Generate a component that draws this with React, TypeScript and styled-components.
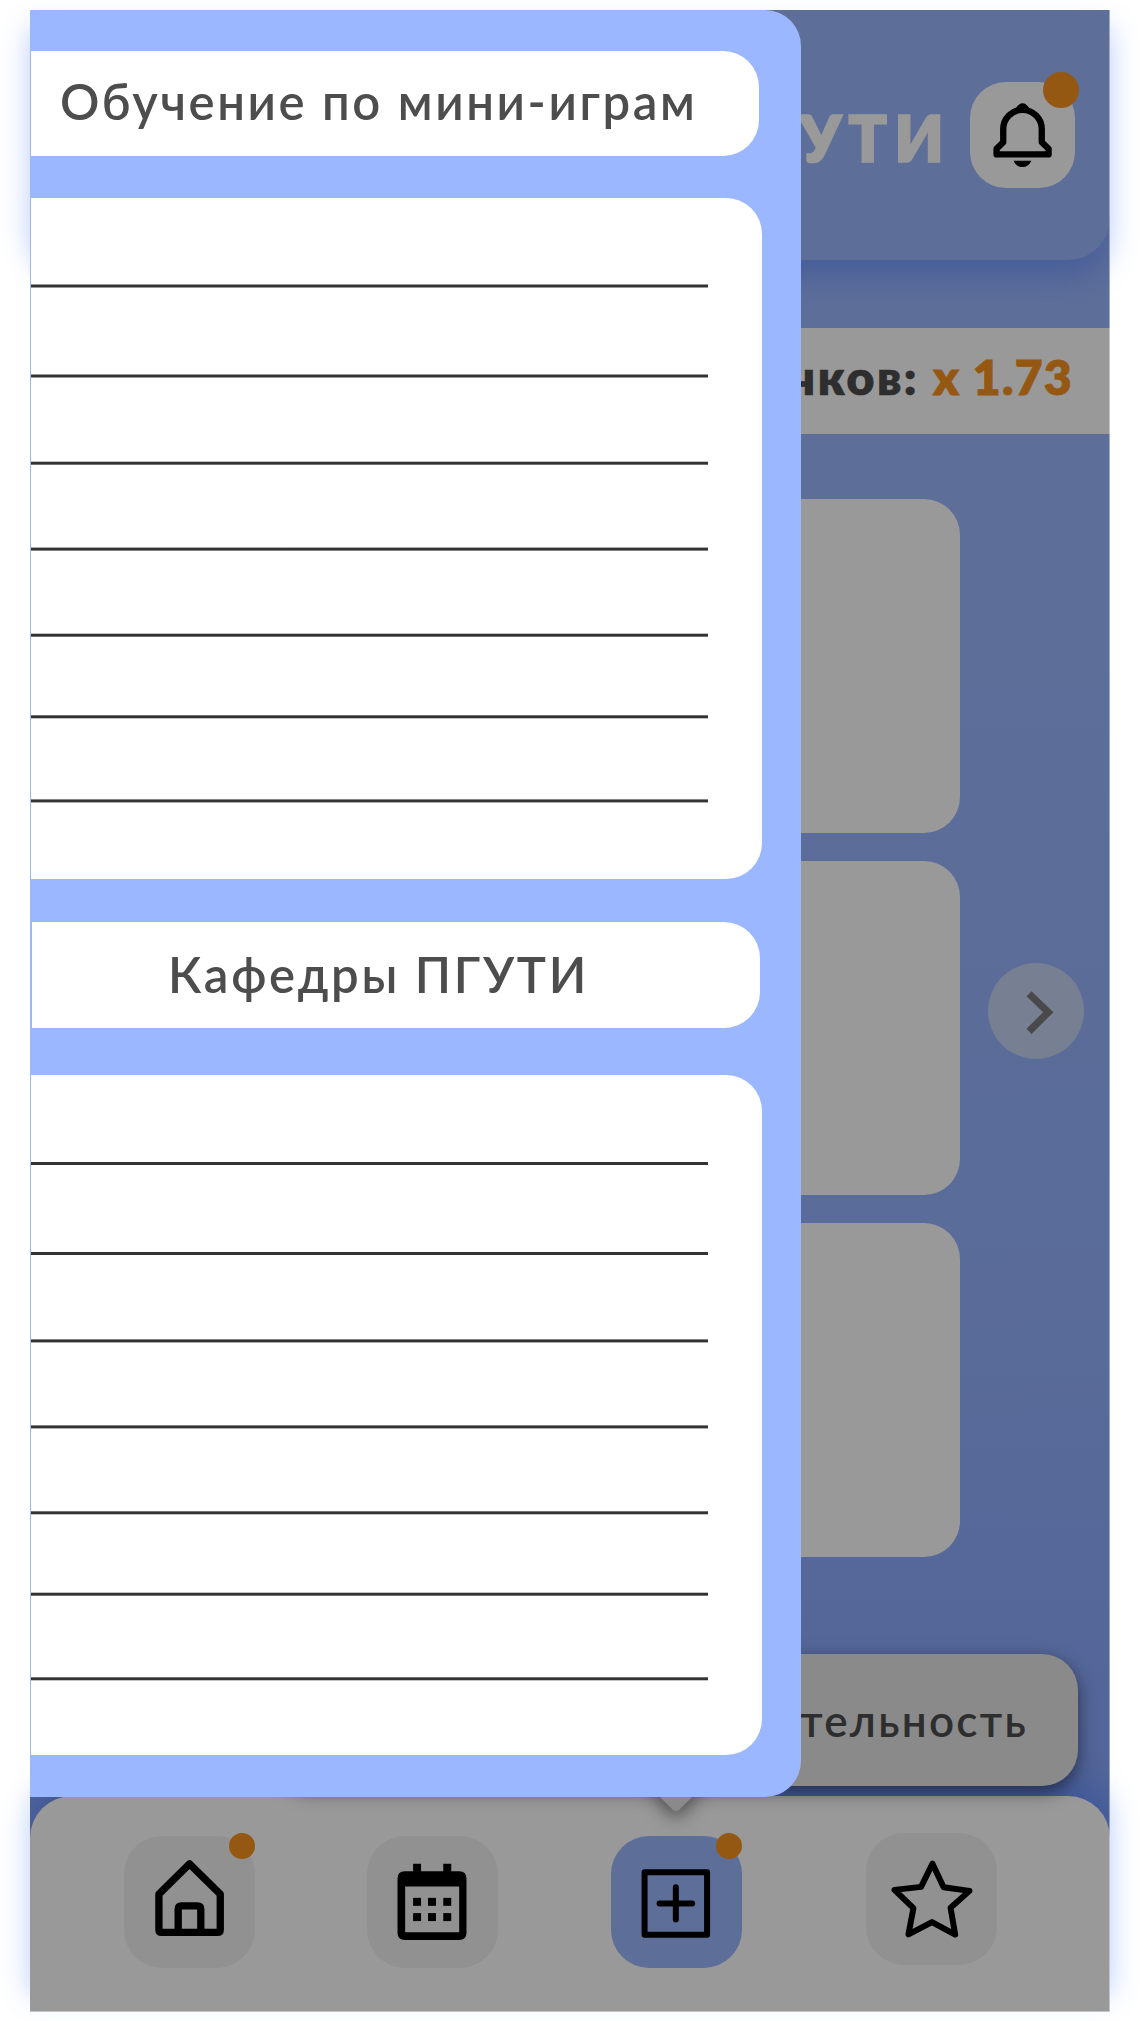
import React from "react";
import styled, { createGlobalStyle } from "styled-components";

const FONT = `Lato, "Open Sans", "Noto Sans", sans-serif`;
const WAVE = "rgba(56, 112, 255, 0.35)";

const GlobalStyle = createGlobalStyle`
  *, *::before, *::after { box-sizing: border-box; }
  html, body { margin: 0; padding: 0; background: #fff; }
  body { height: 2021px; font-family: ${FONT}; overflow: hidden; }
`;

const Phone = styled.main`
  position: relative;
  display: flex;
  flex-direction: column;
  width: 1080px;
  height: 2002px;
  margin: 10px 0 0 30px;
  background: linear-gradient(#9cb8ff 25%, #96b3ff 65%, #8aa9ff 88%, #84a4ff 100%);
`;

const Header = styled.header`
  display: flex;
  flex: none;
  justify-content: flex-end;
  align-items: flex-start;
  height: 250px;
  padding: 72px 35px 0 0;
  background: #9cb8ff;
  border-radius: 0 0 42px 42px;
  box-shadow: 0 18px 28px ${WAVE};
`;

const Brand = styled.h1`
  margin: 3px 19px 0 0;
  font-size: 64px;
  line-height: 106px;
  font-weight: 800;
  letter-spacing: 7px;
  color: #fff;
  -webkit-text-stroke: 1.5px #fff;
`;

const BellButton = styled.button`
  position: relative;
  width: 105px;
  height: 106px;
  padding: 0;
  border: 0;
  border-radius: 36px;
  background: #fff;
`;

const Badge = styled.i<{ $size: number; $top: number; $right: number }>`
  position: absolute;
  top: ${(p) => p.$top}px;
  right: ${(p) => p.$right}px;
  width: ${(p) => p.$size}px;
  height: ${(p) => p.$size}px;
  border-radius: 50%;
  background: #f7931e;
`;

const ScoreBar = styled.section`
  display: flex;
  flex: none;
  justify-content: flex-end;
  align-items: center;
  gap: 14px;
  height: 106px;
  margin-top: 68px;
  padding: 0 37px 8px 0;
  background: #fff;
  font-size: 48px;
  line-height: 58px;
  font-weight: 800;
  color: #4d4d4d;
`;

const ScoreLabel = styled.span`
  letter-spacing: 2.5px;
  -webkit-text-stroke: 0.6px #4d4d4d;
`;

const ScoreValue = styled.b`
  font-weight: 800;
  letter-spacing: 1.3px;
  color: #f7931e;
  -webkit-text-stroke: 0.8px #f7931e;
`;

const Carousel = styled.section`
  display: flex;
  flex: 1;
  align-items: flex-start;
  padding: 65px 0 0 150px;
`;

const Cards = styled.div`
  display: flex;
  flex-direction: column;
  gap: 28px;
  width: 780px;
`;

const Card = styled.article`
  height: 334px;
  border-radius: 36px;
  background: #fff;
`;

const NextButton = styled.button`
  width: 96px;
  height: 96px;
  margin: 464px 0 0 28px;
  padding: 0;
  border: 0;
  border-radius: 50%;
  background: #c5d5f3;
`;

const Glyph = styled.svg`
  display: block;
  width: 100%;
  height: 100%;
`;

const NavBar = styled.nav`
  display: flex;
  flex: none;
  gap: 112px;
  height: 216px;
  padding: 40px 0 0 94px;
  background: #fff;
  border-radius: 42px 42px 0 0;
  box-shadow: 0 -18px 28px ${WAVE};
`;

const NavItem = styled.button<{ $active?: boolean; $raised?: boolean }>`
  position: relative;
  width: 131px;
  height: 132px;
  margin: ${(p) => (p.$raised ? "-3px 0 0 12px" : p.$active ? "0 0 0 1px" : "0")};
  padding: 0;
  border: 0;
  border-radius: 38px;
  background: ${(p) => (p.$active ? "#9cb8ff" : "#f2f2f2")};
`;

const Tooltip = styled.div`
  position: absolute;
  top: 1644px;
  left: 244px;
  width: 804px;
  height: 132px;
  padding-right: 50px;
  border-radius: 36px;
  background: #e6e6e6;
  filter: drop-shadow(0 6px 9px rgba(0, 0, 0, 0.5));
  font-size: 44px;
  line-height: 133px;
  font-weight: 600;
  letter-spacing: 2.3px;
  text-align: right;
  color: #4d4d4d;

  &::after {
    content: "";
    position: absolute;
    left: 380px;
    bottom: -18px;
    width: 44px;
    height: 44px;
    border-radius: 5px;
    background: #e6e6e6;
    transform: rotate(45deg);
  }
`;

const Shade = styled.div`
  position: absolute;
  inset: 0;
  background: rgba(0, 0, 0, 0.4);
  border: solid rgba(255, 255, 255, 0.42);
  border-width: 0 1px 1px 0;
`;

const Drawer = styled.aside`
  position: absolute;
  top: 0;
  left: 0;
  display: flex;
  flex-direction: column;
  width: 771px;
  height: 1787px;
  padding: 41px 0 0 1px;
  border-radius: 0 36px 36px 0;
  background: #9ab7ff;
`;

const Title = styled.h2<{ $second?: boolean }>`
  flex: none;
  width: 728px;
  height: ${(p) => (p.$second ? 106 : 105)}px;
  margin: ${(p) => (p.$second ? "43px 0 0 1px" : "0")};
  padding-left: ${(p) => (p.$second ? 136 : 29)}px;
  border-radius: 0 36px 36px 0;
  background: #fff;
  font-size: 49px;
  line-height: ${(p) => (p.$second ? 104 : 101)}px;
  font-weight: 600;
  letter-spacing: ${(p) => (p.$second ? 2.7 : 2.6)}px;
  white-space: nowrap;
  color: #4d4d4d;
`;

const Sheet = styled.section<{ $gap: number }>`
  flex: none;
  width: 731px;
  height: ${(p) => (p.$gap === 42 ? 681 : 680)}px;
  margin-top: ${(p) => p.$gap}px;
  border-radius: 0 36px 36px 0;
  background: #fff;
  overflow: hidden;
`;

const Rule = styled.hr<{ $space: number; $cut: number }>`
  width: 677px;
  height: 4px;
  margin: ${(p) => p.$space}px 0 0;
  border: 0;
  background: linear-gradient(
    rgba(51, 51, 51, ${(p) => 1 - p.$cut}) 1px,
    #333 1px 3px,
    rgba(51, 51, 51, ${(p) => p.$cut}) 3px
  );
`;

/* Start of every 3px rule, measured from the top edge of its sheet. */
const FIRST_RULES = [86.5, 176.5, 263.7, 349.6, 435.7, 517.3, 601.4];
const SECOND_RULES = [87, 177, 264.4, 350.4, 436.3, 517.7, 602.3];

function Rules({ starts }: { starts: number[] }) {
  let cursor = 0;
  return (
    <>
      {starts.map((start) => {
        const row = Math.floor(start);
        const space = row - cursor;
        cursor = row + 4;
        return <Rule key={start} $space={space} $cut={+(start - row).toFixed(2)} />;
      })}
    </>
  );
}

const BellIcon = () => (
  <Glyph viewBox="629 246 316 319">
    <path
      d="M729 388a58 58 0 0 1 116 0V427L865.500 447V464H709V447L729 427Z"
      fill="none"
      stroke="#000"
      strokeWidth="19"
      strokeLinejoin="round"
    />
    <path d="M766 326Q776 310 787 310Q798 310 808 326L800 336H774Z" />
    <path d="M760 483H814C808 496 799 502 787 502C775 502 766 496 760 483Z" />
  </Glyph>
);

const HomeIcon = () => (
  <Glyph viewBox="371 288 394 395">
    <g fill="none" stroke="#000" strokeWidth="22" strokeLinejoin="round">
      <path d="M568 371L660.500 462V569Q660.500 577 652 577H484Q476 577 476 569V462Z" />
      <path d="M534 577V507Q534 497 544 497H592Q602 497 602 507V577" />
    </g>
  </Glyph>
);

const CalendarIcon = () => (
  <Glyph viewBox="79 348 395 395">
    <path d="M218 430h24v23h67v-23h24v23h24q22 0 22 22v163q0 22-22 22H193q-22 0-22-22V475q0-22 22-22h25ZM194 499V637H357V499Z" fillRule="evenodd" />
    {[533, 579].map((y) => [218, 263, 309].map((x) => <rect key={`${x}${y}`} x={x} y={y} width="24" height="24" />))}
  </Glyph>
);

const PlusIcon = () => (
  <Glyph viewBox="814 348 394 395">
    <g fill="none" stroke="#000" strokeWidth="18" strokeLinejoin="round" strokeLinecap="round">
      <rect x="915" y="456" width="188" height="188" />
      <path d="M1009 501V598M960 550H1058" />
    </g>
  </Glyph>
);

const StarIcon = () => (
  <Glyph viewBox="378 699 395 395">
    <path
      d="M578.500 790L612 861L690 872L633 923L647 1004L577 966L506 1003L521 924L464 869L544 860Z"
      fill="none"
      stroke="#000"
      strokeWidth="18"
      strokeLinejoin="round"
    />
  </Glyph>
);

const ChevronIcon = () => (
  <Glyph viewBox="683 191 289 289">
    <path d="M814 276L880 339L814 405L799 389L849 339L799 291Z" fill="#7a7a7a" />
  </Glyph>
);

export default function App() {
  return (
    <>
      <GlobalStyle />
      <Phone>
        <Header>
          <Brand>ПГУТИ</Brand>
          <BellButton>
            <BellIcon />
            <Badge $size={36} $top={-10} $right={-4} />
          </BellButton>
        </Header>
        <ScoreBar>
          <ScoreLabel>очков:</ScoreLabel>
          <ScoreValue>x 1.73</ScoreValue>
        </ScoreBar>
        <Carousel>
          <Cards>
            <Card />
            <Card />
            <Card />
          </Cards>
          <NextButton>
            <ChevronIcon />
          </NextButton>
        </Carousel>
        <NavBar>
          <NavItem>
            <HomeIcon />
            <Badge $size={26} $top={-3} $right={0} />
          </NavItem>
          <NavItem>
            <CalendarIcon />
          </NavItem>
          <NavItem $active>
            <PlusIcon />
            <Badge $size={26} $top={-3} $right={0} />
          </NavItem>
          <NavItem $raised>
            <StarIcon />
          </NavItem>
        </NavBar>
        <Tooltip>деятельность</Tooltip>
        <Shade />
        <Drawer>
          <Title>Обучение по мини-играм</Title>
          <Sheet $gap={42}>
            <Rules starts={FIRST_RULES} />
          </Sheet>
          <Title $second>Кафедры ПГУТИ</Title>
          <Sheet $gap={47}>
            <Rules starts={SECOND_RULES} />
          </Sheet>
        </Drawer>
      </Phone>
    </>
  );
}
